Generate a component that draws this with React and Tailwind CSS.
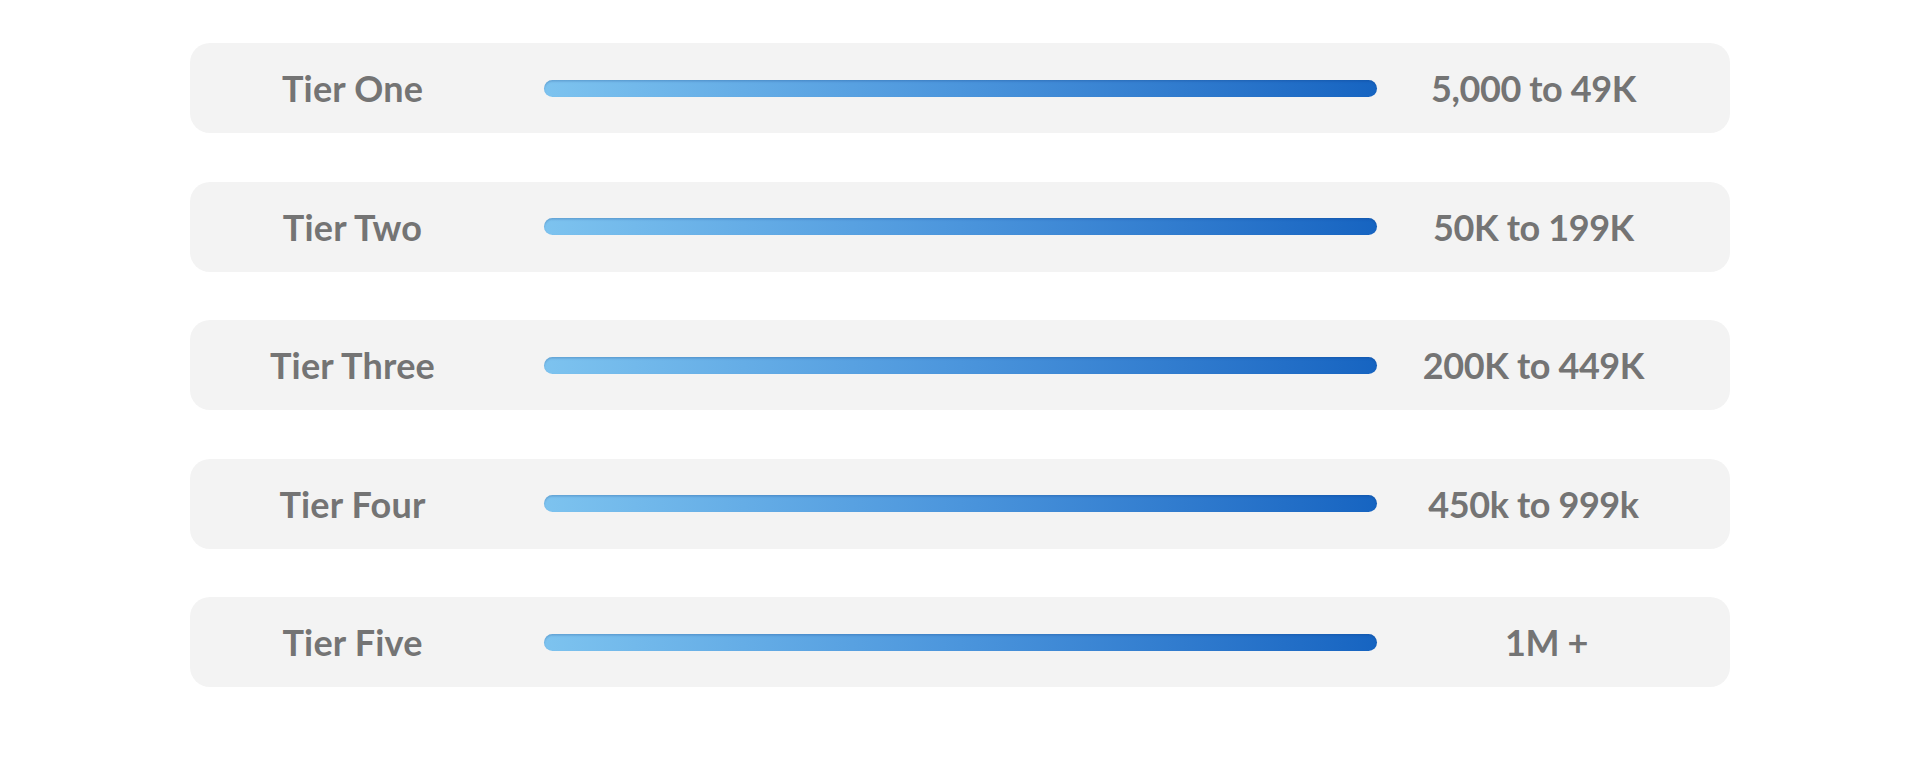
const tiers = [
  { name: 'Tier One', range: '5,000 to 49K' },
  { name: 'Tier Two', range: '50K to 199K' },
  { name: 'Tier Three', range: '200K to 449K' },
  { name: 'Tier Four', range: '450k to 999k' },
  { name: 'Tier Five', range: '1M +', nudge: true },
];

const App = () => {
  return (
    <div className="min-h-screen bg-white pt-[43px]" style={{ fontFamily: 'Lato, "Noto Sans", sans-serif' }}>
      <div className="ml-[190px] w-[1540px] flex flex-col gap-[48.5px]">
        {tiers.map((tier) => (
          <div key={tier.name} className="h-[90px] rounded-[20px] bg-[#f3f3f3] flex items-center text-[36px] font-bold text-[#747474]">
            <div className="w-[325px] text-center leading-none tracking-[0.2px]">{tier.name}</div>
            <div className="ml-[29px] w-[833px] h-[17px] rounded-full bg-gradient-to-r from-[#7dc3ef] via-[#4b95dc] to-[#1664c1] shadow-[inset_0_1.5px_2px_rgba(10,50,120,0.22)]" />
            <div className={`flex-1 text-center leading-none pr-[40px] tracking-[-0.4px] ${tier.nudge ? 'pl-[26px]' : ''}`}>{tier.range}</div>
          </div>
        ))}
      </div>
    </div>
  );
};

export default App;
